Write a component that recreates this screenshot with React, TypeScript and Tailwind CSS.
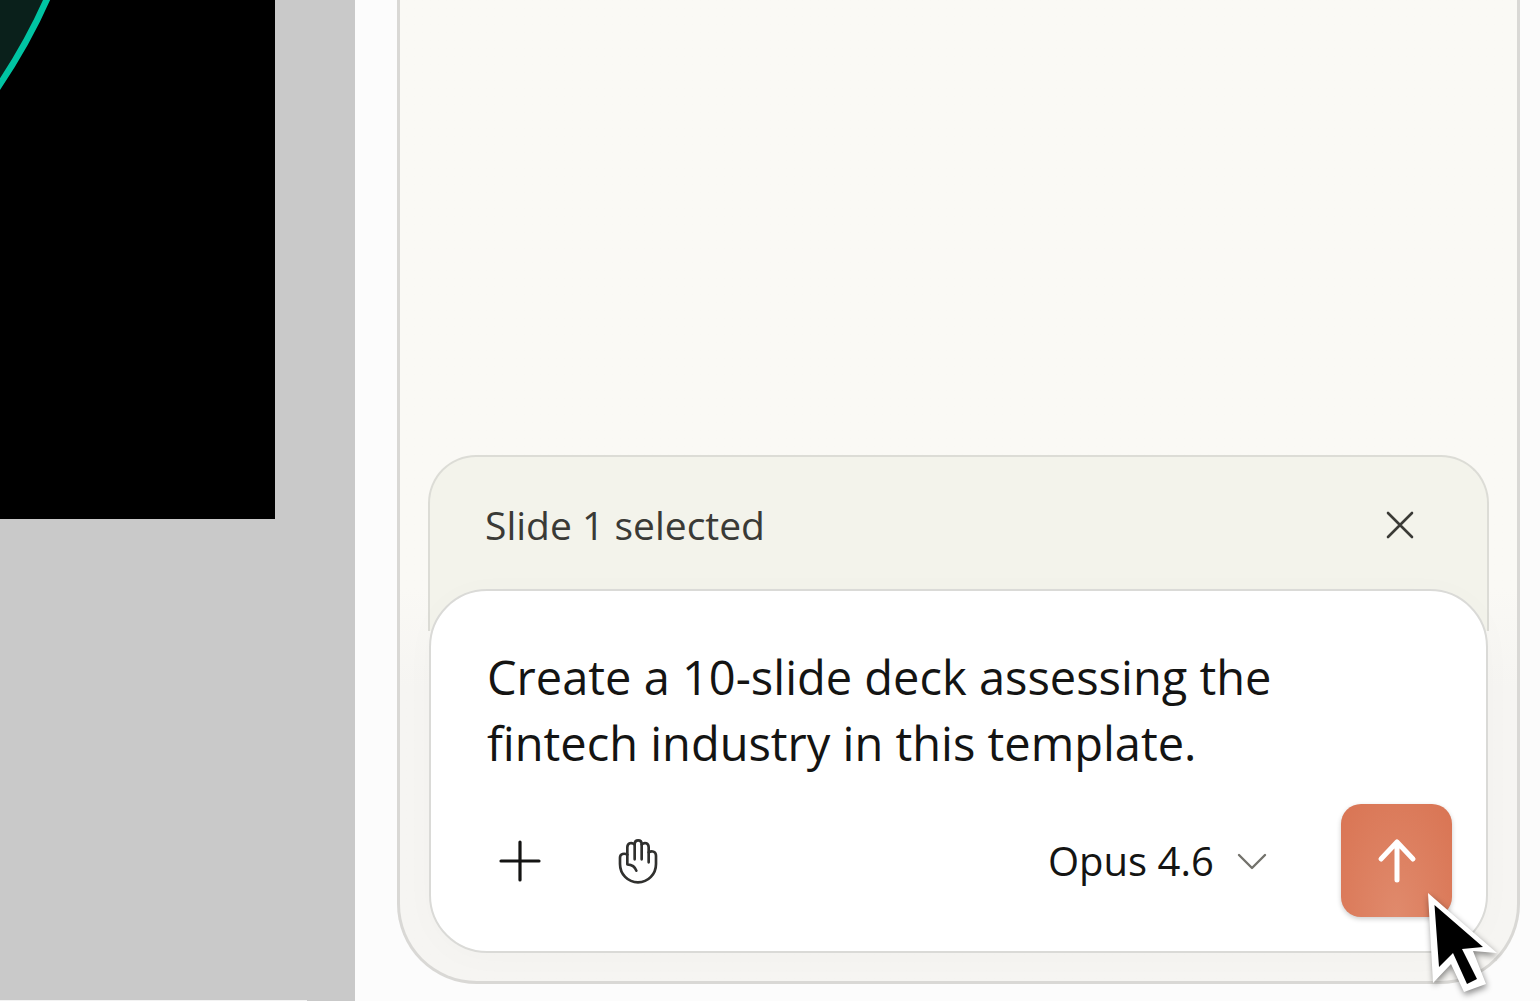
import { useState, ChangeEvent, FormEvent } from 'react';

const MODELS: string[] = ['Opus 4.6', 'Sonnet 4.6', 'Haiku 4.5'];

const CloseIcon = () => (
    <svg className="size-7" viewBox="0 0 28 28" fill="none" stroke="#3a3a36" strokeWidth="2.6" strokeLinecap="round">
        <path d="M2 2 26 26M26 2 2 26" />
    </svg>
);

const PlusIcon = () => (
    <svg className="size-11" viewBox="0 0 44 44" fill="none" stroke="#141413" strokeWidth="3.2" strokeLinecap="round">
        <path d="M22 3V41M3 22H41" />
    </svg>
);

const HandIcon = () => (
    <svg className="h-12 w-10" viewBox="415 50 120 144" fill="none" stroke="#30302e" strokeWidth="8" strokeLinecap="round" strokeLinejoin="round">
        <path d="M443 103C434 98 421 100 421 112V131C421 161 444 186 475 186S529 161 529 131V106C529 93 516 90 507 96" />
        <path d="M507 126V81C507 68 495 65 486 72" />
        <path d="M486 117V72C486 56 465 56 465 72V117" />
        <path d="M465 72C456 65 443 68 443 81V132C457 133 466 139 470 151" />
    </svg>
);

const ChevronIcon = () => (
    <svg className="pointer-events-none absolute top-1/2 right-0 h-5 w-8 -translate-y-1/2" viewBox="0 0 32 20" fill="none" stroke="#73726c" strokeWidth="2.4" strokeLinecap="round" strokeLinejoin="round">
        <path d="M3 4 16 17 29 4" />
    </svg>
);

const ArrowIcon = () => (
    <svg className="h-12 w-10" viewBox="0 0 40 48" fill="none" stroke="white" strokeWidth="5" strokeLinecap="round" strokeLinejoin="round">
        <path d="M20 43V5M4 22 20 5 36 22" />
    </svg>
);

const Pointer = () => (
    <svg className="pointer-events-none absolute top-[87px] left-[85px] h-[108px] w-20 drop-shadow-[1px_3px_3px_rgba(0,0,0,0.45)]" viewBox="0 0 80 108">
        <path d="M2 2 71 62 47 60 60 93 38 101 25 73 7 92Z" fill="white" />
        <path d="M8.500 14 57 56 36 58 51 88 41 93 27 62 13 76Z" fill="black" />
    </svg>
);

const App = () => {
    const [prompt, setPrompt] = useState<string>('Create a 10-slide deck assessing the fintech industry in this template.');
    const [model, setModel] = useState<string>(MODELS[0]);
    const [showSelection, setShowSelection] = useState<boolean>(true);

    const handleSubmit = (e: FormEvent<HTMLFormElement>): void => {
        e.preventDefault();
        setPrompt('');
    };

    return (
        <div className="flex min-h-screen bg-[#fcfcfc] font-['Open_Sans','Noto_Sans',sans-serif]">
            {/* Slide canvas */}
            <section className="flex w-[355px] shrink-0 flex-col justify-between bg-[#c9c9c9]">
                <div className="mr-20 h-[519px] bg-black">
                    <svg className="h-[100px] w-full" viewBox="0 0 275 100" preserveAspectRatio="xMinYMin meet">
                        <path d="M0 0H47Q28 43 0 85Z" fill="#0a201b" />
                        <path d="M50 -8Q29 42 -6 93" fill="none" stroke="#00c4a3" strokeWidth="6.500" />
                    </svg>
                </div>
                <div className="mr-12 h-px bg-[#f3f3f3]" />
            </section>

            {/* Chat panel */}
            <main className="flex min-w-0 flex-1 pr-5 pb-[17px] pl-[42px]">
                <div className="flex min-w-0 flex-1 flex-col justify-end rounded-b-[80px] border-x-[3px] border-b-[3px] border-[#d9d8d5] bg-linear-to-b from-[#faf9f5] from-60% to-[#f6f5f2] to-70% p-7">
                    {showSelection && (
                        <div className="flex items-center justify-between rounded-t-[48px] border-2 border-b-0 border-[#dcdcd6] bg-[#f3f3eb] pt-[41px] pr-[73px] pb-[79px] pl-[55px]">
                            <span className="text-[39px] leading-[54px] text-[#3a3a36]">Slide 1 selected</span>
                            <button type="button" aria-label="Clear selection" className="cursor-pointer" onClick={() => setShowSelection(false)}>
                                <CloseIcon />
                            </button>
                        </div>
                    )}

                    <form
                        className="relative mx-px -mt-[42px] rounded-[58px] border-2 border-[#dadad7] bg-white pt-[53px] pr-[34px] pb-[34px] pl-14 shadow-[0_4px_36px_rgba(0,0,0,0.02)]"
                        onSubmit={handleSubmit}
                    >
                        <textarea
                            aria-label="Prompt"
                            rows={2}
                            value={prompt}
                            onChange={(e: ChangeEvent<HTMLTextAreaElement>) => setPrompt(e.target.value)}
                            className="block w-full resize-none overflow-hidden pr-12 text-[47px] leading-[66px] text-[#141413] outline-none"
                        />

                        <div className="mt-7 flex items-center">
                            <button type="button" aria-label="Add attachment" className="ml-[11px] cursor-pointer">
                                <PlusIcon />
                            </button>
                            <button type="button" aria-label="Ask before edits" className="ml-[76px] cursor-pointer">
                                <HandIcon />
                            </button>

                            <div className="relative ml-auto">
                                <select
                                    aria-label="Model"
                                    value={model}
                                    onChange={(e: ChangeEvent<HTMLSelectElement>) => setModel(e.target.value)}
                                    className="block w-[220px] cursor-pointer appearance-none text-[40px] leading-[54px] text-[#141413] outline-none"
                                >
                                    {MODELS.map((name) => (
                                        <option key={name}>{name}</option>
                                    ))}
                                </select>
                                <ChevronIcon />
                            </div>

                            <div className="relative ml-[73px]">
                                <button
                                    type="submit"
                                    aria-label="Send"
                                    className="flex h-[113px] w-[111px] cursor-pointer items-center justify-center rounded-[20px] bg-[#d97757] bg-radial-[at_50%_100%] from-[#e08a6c] to-[#d97453] shadow-[0_2px_5px_rgba(0,0,0,0.2)]"
                                >
                                    <ArrowIcon />
                                </button>
                                <Pointer />
                            </div>
                        </div>
                    </form>
                </div>
            </main>
        </div>
    );
};

export default App;
